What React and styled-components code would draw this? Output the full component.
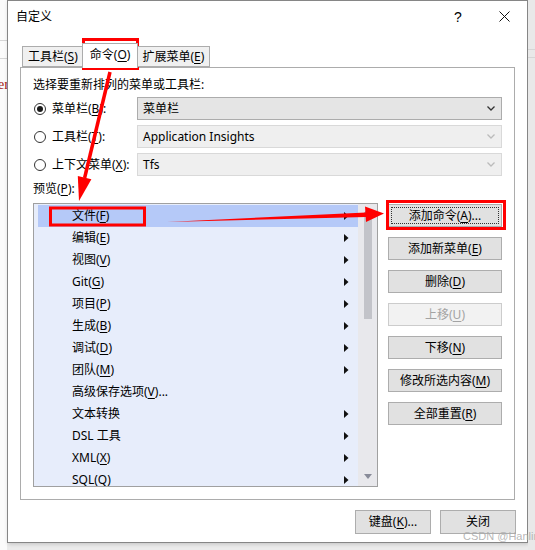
import React from 'react';
import styled, { createGlobalStyle } from 'styled-components';

const Global = createGlobalStyle`
  html, body { margin: 0; padding: 0; }
  body {
    width: 535px; height: 550px; overflow: hidden;
    background: #ebebeb;
    font-family: "Noto Sans", "Noto Sans CJK SC", sans-serif;
    font-size: 12px; color: #000;
  }
`;

const Page = styled.div`
  position: relative;
  width: 535px; height: 550px;
  display: flex; align-items: flex-start;
`;

const LeftStrip = styled.div`
  width: 7px; height: 550px; flex: none;
  background: #fbfbfb; overflow: hidden;
  display: flex; flex-direction: column;
`;
const StripLine = styled.div`
  height: 1px; background: #d6d6d6; margin-top: ${p => p.$mt}px; width: 7px;
`;
const StripText = styled.div`
  margin-top: 18px; margin-left: -2px;
  font-family: "Liberation Serif", serif; font-size: 14px; color: #a31515;
  white-space: nowrap; line-height: 16px;
`;

const RightStrip = styled.div`
  flex: 1; height: 550px; background: #e9e9e9;
  display: flex; flex-direction: column;
`;

const Window = styled.div`
  box-sizing: border-box;
  width: 521px; height: 543px; flex: none;
  border: 1px solid #868686;
  background: #fff;
  display: flex; flex-direction: column;
  box-shadow: 1px 1px 4px rgba(0,0,0,0.18);
`;

const TitleBar = styled.div`
  height: 31px; flex: none;
  display: flex; align-items: center;
  padding-left: 8px;
`;
const Title = styled.div`
  flex: 1; font-size: 12px; line-height: 16px; margin-top: 1px;
`;
const TitleButton = styled.div`
  width: 46px; height: 31px;
  display: flex; align-items: center; justify-content: center;
  font-size: 14px;
  font-family: "Liberation Sans", sans-serif;
`;

const Body = styled.div`
  padding: 10px 12px 0;
  display: flex; flex-direction: column;
`;

const TabRow = styled.div`
  height: 25px; display: flex; align-items: flex-end;
  padding-left: 2px;
`;
const Tab = styled.div`
  position: relative;
  z-index: ${p => (p.$active ? 2 : 1)};
  box-sizing: border-box;
  height: ${p => (p.$active ? 25 : 21)}px;
  margin: 0 ${p => (p.$active ? -2 : 0)}px ${p => (p.$active ? -1 : 0)}px;
  padding: 0 ${p => (p.$active ? 7 : 5)}px;
  border: 1px solid #acacac;
  border-bottom: ${p => (p.$active ? 'none' : '1px solid #acacac')};
  background: ${p => (p.$active ? '#fff' : '#f0f0f0')};
  line-height: ${p => (p.$active ? 22 : 19)}px;
  white-space: nowrap;
  & + & { border-left: ${p => (p.$active ? '1px solid #acacac' : 'none')}; }
`;

const Panel = styled.div`
  box-sizing: border-box;
  height: 433px;
  border: 1px solid #acacac;
  padding: 9px 12px 12px;
  display: flex; flex-direction: column;
`;

const Label = styled.div`
  line-height: 16px; height: 16px;
`;

const Key = styled.span`
  text-decoration: underline;
  text-underline-offset: 2px;
`;

const Choices = styled.div`
  margin-top: 4px;
  display: grid;
  grid-template-columns: 104px 1fr;
  row-gap: 5px;
`;
const RadioLabel = styled.div`
  display: flex; align-items: center; gap: 6px;
  padding-left: 1px; height: 23px;
  white-space: nowrap;
`;
const RadioText = styled.span`
  line-height: 16px;
`;
const RadioCircle = styled.div`
  box-sizing: border-box; flex: none;
  width: 12px; height: 12px; border-radius: 50%;
  border: 1px solid #333;
  background: #fff;
  display: flex; align-items: center; justify-content: center;
  &::after {
    content: '';
    width: 6px; height: 6px; border-radius: 50%;
    background: ${p => (p.$checked ? '#1a1a1a' : 'transparent')};
  }
`;
const Select = styled.div`
  box-sizing: border-box;
  height: 23px;
  border: 1px solid ${p => (p.$disabled ? '#d9d9d9' : '#acacac')};
  background: ${p => (p.$disabled ? '#efefef' : '#e5e5e5')};
  display: flex; align-items: center;
  padding: 0 6px 0 5px;
`;
const SelectText = styled.div`
  flex: 1; line-height: 16px;
`;

const PreviewLabel = styled(Label)`
  margin-top: 5px;
`;

const PreviewArea = styled.div`
  margin-top: 6px;
  display: flex; gap: 10px;
  align-items: flex-start;
`;

const ListBox = styled.div`
  box-sizing: border-box;
  width: 345px; height: 284px;
  border: 1px solid #a0a0a0;
  background: #eef2fc;
  display: flex;
  overflow: hidden;
`;
const MenuArea = styled.div`
  flex: 1;
  padding: 1px 0 0 4px;
  background: #e7edfb;
  display: flex; flex-direction: column;
  overflow: hidden;
`;
const MenuRow = styled.div`
  flex: none;
  height: 22px;
  display: flex; align-items: center;
  padding: 0 9px 0 34px;
  background: ${p => (p.$selected ? '#b5c9f8' : 'transparent')};
`;
const MenuText = styled.div`
  flex: 1; line-height: 16px; white-space: nowrap;
`;

const ScrollBar = styled.div`
  width: 19px; flex: none;
  background: #e8e8ec;
  display: flex; flex-direction: column; align-items: center;
`;
const ScrollArrow = styled.div`
  height: ${p => p.$h}px;
  display: flex; align-items: ${p => (p.$down ? 'flex-start' : 'flex-end')};
  justify-content: center;
`;
const Thumb = styled.div`
  width: 8px; height: 104px; margin-top: 2px;
  background: #c2c3c9;
  margin-left: 1px;
`;
const ScrollSpacer = styled.div`flex: 1;`;

const ButtonColumn = styled.div`
  margin-top: 1px;
  width: 114px;
  display: flex; flex-direction: column; gap: 10px;
`;
const Button = styled.div`
  box-sizing: border-box;
  position: relative;
  width: ${p => p.$w || 114}px; height: ${p => p.$h || 23}px;
  border: 1px solid ${p => (p.$disabled ? '#cccccc' : '#adadad')};
  background: ${p => (p.$disabled ? '#f2f2f2' : '#e1e1e1')};
  color: ${p => (p.$disabled ? '#a3a3a3' : '#000')};
  text-align: center;
  line-height: ${p => (p.$h || 23) - 2}px;
  white-space: nowrap;
  outline: ${p => (p.$focus ? '1px dotted #333' : 'none')};
  outline-offset: -4px;
`;

const Footer = styled.div`
  display: flex; justify-content: flex-end; gap: 9px;
  padding-top: 10px;
  margin-right: -1px;
`;

const Overlay = styled.svg`
  position: absolute; left: 0; top: 0;
  pointer-events: none;
`;
const Watermark = styled.div`
  position: absolute; left: 463px; top: 530px;
  font-family: "Liberation Sans", sans-serif; font-size: 11px;
  color: rgba(170,170,170,0.85);
  white-space: nowrap;
`;

const Tri = () => (
  <svg width="5" height="8" viewBox="0 0 5 8"><path d="M0 0 L4.5 4 L0 8 Z" fill="#111" /></svg>
);
const Chevron = ({ color }) => (
  <svg width="8" height="5" viewBox="0 0 8 5"><path d="M0.5 0.5 L4 4 L7.5 0.5" fill="none" stroke={color} strokeWidth="1.3" /></svg>
);

const K = ({ children }) => <Key>{children}</Key>;

const menuItems = [
  { t: <>文件(<K>F</K>)</>, s: true, sub: true },
  { t: <>编辑(<K>E</K>)</>, sub: true },
  { t: <>视图(<K>V</K>)</>, sub: true },
  { t: <>Git(<K>G</K>)</>, sub: true },
  { t: <>项目(<K>P</K>)</>, sub: true },
  { t: <>生成(<K>B</K>)</>, sub: true },
  { t: <>调试(<K>D</K>)</>, sub: true },
  { t: <>团队(<K>M</K>)</>, sub: true },
  { t: <>高级保存选项(<K>V</K>)...</>, sub: false },
  { t: <>文本转换</>, sub: true },
  { t: <>DSL 工具</>, sub: true },
  { t: <>XML(<K>X</K>)</>, sub: true },
  { t: <>SQL(<K>Q</K>)</>, sub: true },
];

export default function App() {
  return (
    <>
      <Global />
      <Page>
        <LeftStrip>
          <StripLine $mt={40} />
          <StripLine $mt={17} />
          <StripText>er</StripText>
        </LeftStrip>
        <Window>
          <TitleBar>
            <Title>自定义</Title>
            <TitleButton>?</TitleButton>
            <TitleButton>
              <svg width="11" height="11" viewBox="0 0 11 11">
                <path d="M0.5 0.5 L10.5 10.5 M10.5 0.5 L0.5 10.5" stroke="#111" strokeWidth="1" />
              </svg>
            </TitleButton>
          </TitleBar>
          <Body>
            <TabRow>
              <Tab>工具栏(<K>S</K>)</Tab>
              <Tab $active>命令(<K>O</K>)</Tab>
              <Tab>扩展菜单(<K>E</K>)</Tab>
            </TabRow>
            <Panel>
              <Label>选择要重新排列的菜单或工具栏:</Label>
              <Choices>
                <RadioLabel><RadioCircle $checked /><RadioText>菜单栏(<K>B</K>):</RadioText></RadioLabel>
                <Select><SelectText>菜单栏</SelectText><Chevron color="#333" /></Select>
                <RadioLabel><RadioCircle /><RadioText>工具栏(<K>T</K>):</RadioText></RadioLabel>
                <Select $disabled><SelectText>Application Insights</SelectText><Chevron color="#bbb" /></Select>
                <RadioLabel><RadioCircle /><RadioText>上下文菜单(<K>X</K>):</RadioText></RadioLabel>
                <Select $disabled><SelectText>Tfs</SelectText><Chevron color="#bbb" /></Select>
              </Choices>
              <PreviewLabel>预览(<K>P</K>):</PreviewLabel>
              <PreviewArea>
                <ListBox>
                  <MenuArea>
                    {menuItems.map((m, i) => (
                      <MenuRow key={i} $selected={m.s}>
                        <MenuText>{m.t}</MenuText>
                        {m.sub && <Tri />}
                      </MenuRow>
                    ))}
                  </MenuArea>
                  <ScrollBar>
                    <ScrollArrow $h={9}>
                      <svg width="7" height="4" viewBox="0 0 7 4"><path d="M0 4 L3.5 0 L7 4 Z" fill="#888b99" /></svg>
                    </ScrollArrow>
                    <Thumb />
                    <ScrollSpacer />
                    <ScrollArrow $h={12} $down>
                      <svg width="8" height="5" viewBox="0 0 8 5"><path d="M0 0 L8 0 L4 5 Z" fill="#888b99" /></svg>
                    </ScrollArrow>
                  </ScrollBar>
                </ListBox>
                <ButtonColumn>
                  <Button $focus>添加命令(<K>A</K>)...</Button>
                  <Button>添加新菜单(<K>E</K>)</Button>
                  <Button>删除(<K>D</K>)</Button>
                  <Button $disabled>上移(<K>U</K>)</Button>
                  <Button>下移(<K>N</K>)</Button>
                  <Button>修改所选内容(<K>M</K>)</Button>
                  <Button>全部重置(<K>R</K>)</Button>
                </ButtonColumn>
              </PreviewArea>
            </Panel>
            <Footer>
              <Button $w={76} $h={24}>键盘(<K>K</K>)...</Button>
              <Button $w={76} $h={24}>关闭</Button>
            </Footer>
          </Body>
        </Window>
        <RightStrip>
          <StripLine $mt={49} />
          <StripLine $mt={7} />
        </RightStrip>
        <Overlay width="535" height="550" viewBox="0 0 535 550">
          <rect x="83.5" y="39.5" width="54" height="29" fill="none" stroke="#ff0000" strokeWidth="3" />
          <rect x="50.5" y="208" width="94" height="17" fill="none" stroke="#ff0000" strokeWidth="3" />
          <rect x="387.5" y="201.5" width="117" height="27" fill="none" stroke="#ff0000" strokeWidth="3" />
          <line x1="110" y1="72" x2="84.6" y2="178" stroke="#ff0000" strokeWidth="3.5" />
          <polygon points="79,201 77.8,176.1 91.4,179.3" fill="#ff0000" />
          <polygon points="167,222 366,212.5 366,217" fill="#ff0000" />
          <polygon points="384,213.5 365,206.5 366,222" fill="#ff0000" />
        </Overlay>
        <Watermark>CSDN @Hanlin</Watermark>
      </Page>
    </>
  );
}
